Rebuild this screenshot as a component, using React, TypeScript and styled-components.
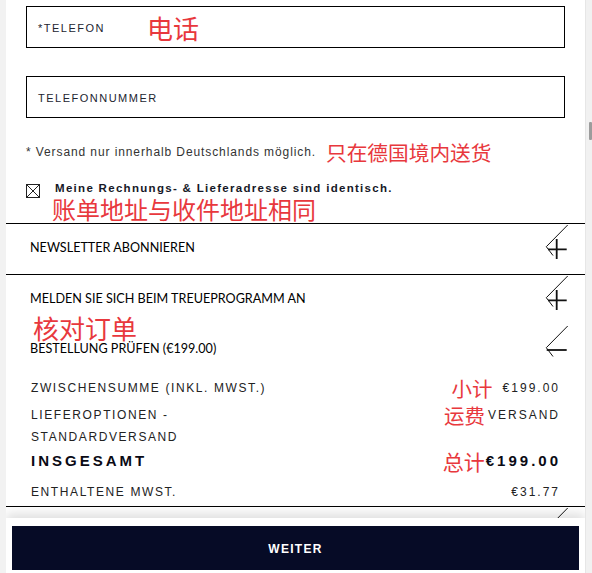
import React from 'react'
import styled, { createGlobalStyle } from 'styled-components'

const GlobalStyle = createGlobalStyle`
    html, body {
        margin: 0;
        padding: 0;
        background: #f3f3f3;
    }
    body {
        font-family: "Liberation Sans", Arial, sans-serif;
    }
    * {
        box-sizing: border-box;
    }
`

const Page = styled('div')`
    display: flex;
    width: 592px;
    height: 573px;
    overflow: hidden;
    background: #f3f3f3;
`

const Gutter = styled('div')`
    flex: 0 0 6px;
    background: #f2f2f2;
`

const Panel = styled('div')`
    position: relative;
    flex: 0 0 579px;
    height: 573px;
    background: #fff;
    overflow: hidden;
`

const ScrollTrack = styled('div')`
    flex: 1 1 0%;
    background: #f1f1f1;
    border-left: 1px solid #e6e6e6;
    padding: 122px 0 0 3px;
`

const ScrollThumb = styled('div')`
    width: 3px;
    height: 18px;
    background: #9c9c9c;
    border-radius: 1px;
`

const FormBlock = styled('div')`
    padding: 6px 20px 3px;
`

const Fields = styled('div')`
    display: flex;
    flex-direction: column;
    gap: 28px;
`

const Field = styled('div')`
    display: flex;
    align-items: center;
    height: 42px;
    border: 1.5px solid #000;
    padding: 1px 0 0 11px;
`

const FieldLabel = styled('span')`
    font-size: 11px;
    letter-spacing: 1.5px;
    color: #22242f;
`

interface AnnotationType {
    $size: number
    $left?: number
    $right?: number
}

const Annotation = styled('span')<AnnotationType>`
    font-family: "Noto Sans CJK SC", sans-serif;
    font-size: ${({ $size }): number => $size}px;
    font-weight: 400;
    letter-spacing: 0;
    line-height: ${({ $size }): number => $size}px;
    color: #e8383d;
    margin-left: ${({ $left }): number => $left ?? 0}px;
    margin-right: ${({ $right }): number => $right ?? 0}px;
    white-space: nowrap;
`

const ShippingNote = styled('p')`
    display: flex;
    align-items: center;
    height: 22px;
    margin: 23px 0 0;
    font-size: 12px;
    letter-spacing: 0.9px;
    color: #333;
`

const CheckRow = styled('div')`
    display: flex;
    align-items: flex-start;
    gap: 15px;
    margin-top: 18px;
`

const CheckBox = styled('svg')`
    display: block;
    flex: 0 0 14px;
    margin-top: 3px;
`

const CheckText = styled('div')`
    display: flex;
    flex-direction: column;
`

const CheckLabel = styled('span')`
    font-size: 11.5px;
    font-weight: 700;
    letter-spacing: 1.3px;
    line-height: 14px;
    color: #161827;
`

const CheckNote = styled(Annotation)`
    margin: 2px 0 0 -3px;
    line-height: 23px;
`

interface AccordionRowType {
    $top?: boolean
    $bottom?: boolean
}

const AccordionRow = styled('div')<AccordionRowType>`
    position: relative;
    display: flex;
    justify-content: space-between;
    align-items: flex-start;
    box-sizing: content-box;
    height: 50px;
    padding: 0 15px 0 24px;
    border-top: ${({ $top }): string => $top ? '1px solid #000' : 'none'};
    border-bottom: ${({ $bottom }): string => $bottom ? '1px solid #000' : 'none'};
`

const AccordionTitle = styled('span')`
    padding-top: 17px;
    font-family: Lato, "Open Sans", sans-serif;
    font-size: 12.6px;
    line-height: 14px;
    color: #000;
`

const IconSvg = styled('svg')`
    display: block;
    flex: 0 0 26px;
`

const ReviewNote = styled(Annotation)`
    position: absolute;
    left: 27px;
    top: 41px;
    line-height: 24px;
`

const Summary = styled('div')`
    display: flex;
    flex-direction: column;
    padding: 2px 27px 3px 25px;
    border-bottom: 1px solid #000;
`

interface SummaryRowType {
    $gap: number
}

const SummaryRow = styled('div')<SummaryRowType>`
    display: flex;
    justify-content: space-between;
    align-items: flex-start;
    margin-bottom: ${({ $gap }): number => $gap}px;
`

interface SummaryTextType {
    $strong?: boolean
}

const SummaryLabel = styled('span')<SummaryTextType>`
    max-width: 250px;
    font-size: ${({ $strong }): number => $strong ? 15 : 12}px;
    font-weight: ${({ $strong }): number => $strong ? 700 : 400};
    letter-spacing: ${({ $strong }): number => $strong ? 3 : 1.6}px;
    line-height: 22px;
    color: ${({ $strong }): string => $strong ? '#0a0a14' : '#222'};
`

const SummaryValue = styled('span')<SummaryTextType>`
    display: flex;
    align-items: center;
    white-space: nowrap;
    margin-right: ${({ $strong }): number => $strong ? -3 : -2}px;
    font-size: ${({ $strong }): number => $strong ? 15 : 12}px;
    font-weight: ${({ $strong }): number => $strong ? 700 : 400};
    letter-spacing: ${({ $strong }): number => $strong ? 3 : 2}px;
    line-height: 22px;
    color: ${({ $strong }): string => $strong ? '#0a0a14' : '#222'};
`

const Footer = styled('div')`
    position: absolute;
    left: 0;
    right: 0;
    bottom: 0;
    padding: 8px 6px 3px;
    background: #fff;
    box-shadow: 0 -5px 10px rgba(0, 0, 0, 0.12);
`

const ContinueButton = styled('button')`
    display: block;
    width: 100%;
    height: 44px;
    padding: 2px 0 0;
    border: none;
    background: #060b26;
    color: #fff;
    font-family: "Liberation Sans", Arial, sans-serif;
    font-size: 12px;
    font-weight: 700;
    letter-spacing: 1.3px;
    cursor: pointer;
`

const ToggleIcon = ({ open }: { open?: boolean }): React.ReactElement => (
    <IconSvg width={26} height={38} viewBox="0 0 26 38">
        <path d="M23.7 1 L2.3 22.7 L9 31.5" fill="none" stroke="#111" strokeWidth={1} />
        {open
            ? <path d="M2.7 25 H22.7" fill="none" stroke="#111" strokeWidth={1.8} />
            : <path d="M4 25.3 H22.7 M12.7 15 V35" fill="none" stroke="#111" strokeWidth={1.8} />}
    </IconSvg>
)

const App = (): React.ReactElement => (
    <>
        <GlobalStyle />
        <Page>
            <Gutter />
            <Panel>
                <FormBlock>
                    <Fields>
                        <Field>
                            <FieldLabel>*TELEFON</FieldLabel>
                            <Annotation $size={26} $left={42}>电话</Annotation>
                        </Field>
                        <Field>
                            <FieldLabel>TELEFONNUMMER</FieldLabel>
                        </Field>
                    </Fields>
                    <ShippingNote>
                        * Versand nur innerhalb Deutschlands möglich.
                        <Annotation $size={20.7} $left={10}>只在德国境内送货</Annotation>
                    </ShippingNote>
                    <CheckRow>
                        <CheckBox width={14} height={14} viewBox="0 0 14 14">
                            <rect x={0.5} y={0.5} width={13} height={13} fill="none" stroke="#222" />
                            <path d="M1 1 L13 13 M13 1 L1 13" stroke="#222" strokeWidth={1} />
                        </CheckBox>
                        <CheckText>
                            <CheckLabel>Meine Rechnungs- &amp; Lieferadresse sind identisch.</CheckLabel>
                            <CheckNote $size={24}>账单地址与收件地址相同</CheckNote>
                        </CheckText>
                    </CheckRow>
                </FormBlock>

                <AccordionRow $top $bottom>
                    <AccordionTitle>NEWSLETTER ABONNIEREN</AccordionTitle>
                    <ToggleIcon />
                </AccordionRow>
                <AccordionRow>
                    <AccordionTitle>MELDEN SIE SICH BEIM TREUEPROGRAMM AN</AccordionTitle>
                    <ToggleIcon />
                    <ReviewNote $size={26}>核对订单</ReviewNote>
                </AccordionRow>
                <AccordionRow>
                    <AccordionTitle>BESTELLUNG PRÜFEN (€199.00)</AccordionTitle>
                    <ToggleIcon open />
                </AccordionRow>

                <Summary>
                    <SummaryRow $gap={5}>
                        <SummaryLabel>ZWISCHENSUMME (INKL. MWST.)</SummaryLabel>
                        <SummaryValue>
                            <Annotation $size={20.5} $right={10}>小计</Annotation>
                            €199.00
                        </SummaryValue>
                    </SummaryRow>
                    <SummaryRow $gap={2}>
                        <SummaryLabel>LIEFEROPTIONEN - STANDARDVERSAND</SummaryLabel>
                        <SummaryValue>
                            <Annotation $size={20.5} $right={3}>运费</Annotation>
                            VERSAND
                        </SummaryValue>
                    </SummaryRow>
                    <SummaryRow $gap={9}>
                        <SummaryLabel $strong>INSGESAMT</SummaryLabel>
                        <SummaryValue $strong>
                            <Annotation $size={21} $right={1}>总计</Annotation>
                            €199.00
                        </SummaryValue>
                    </SummaryRow>
                    <SummaryRow $gap={0}>
                        <SummaryLabel>ENTHALTENE MWST.</SummaryLabel>
                        <SummaryValue>€31.77</SummaryValue>
                    </SummaryRow>
                </Summary>

                <AccordionRow>
                    <AccordionTitle />
                    <ToggleIcon />
                </AccordionRow>

                <Footer>
                    <ContinueButton type="button">WEITER</ContinueButton>
                </Footer>
            </Panel>
            <ScrollTrack>
                <ScrollThumb />
            </ScrollTrack>
        </Page>
    </>
)

export default App
